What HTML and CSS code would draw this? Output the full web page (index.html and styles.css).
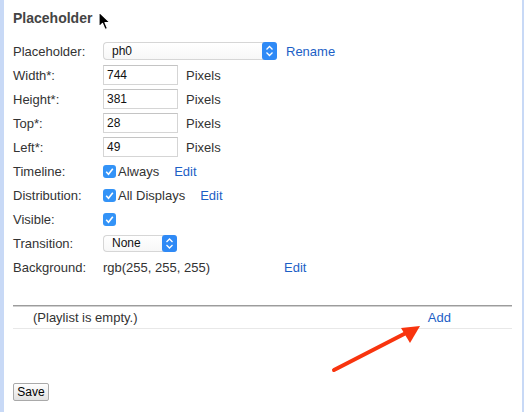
FILE: index.html
```html
<!DOCTYPE html>
<html>
<head>
<meta charset="utf-8">
<link rel="stylesheet" href="styles.css">
</head>
<body>
<div class="page">
  <h2 class="title">Placeholder</h2>
  <div class="form">
    <div class="row">
      <span class="label">Placeholder:</span>
      <span class="select wide"><span class="sel-text">ph0</span><svg class="stepper" width="15" height="18" viewBox="0 0 15 18"><rect x="0" y="0" width="15" height="18" rx="3" fill="#2f8af6"/><path d="M4.5 7.5 L7.5 4.5 L10.5 7.5 M4.5 10.5 L7.5 13.5 L10.5 10.5" stroke="#fff" stroke-width="1.3" fill="none"/></svg></span>
      <a class="link rename">Rename</a>
    </div>
    <div class="row">
      <span class="label">Width*:</span>
      <span class="input">744</span><span class="unit">Pixels</span>
    </div>
    <div class="row">
      <span class="label">Height*:</span>
      <span class="input">381</span><span class="unit">Pixels</span>
    </div>
    <div class="row">
      <span class="label">Top*:</span>
      <span class="input">28</span><span class="unit">Pixels</span>
    </div>
    <div class="row">
      <span class="label">Left*:</span>
      <span class="input">49</span><span class="unit">Pixels</span>
    </div>
    <div class="row">
      <span class="label">Timeline:</span>
      <svg class="check" width="13" height="13" viewBox="0 0 13 13"><rect width="13" height="13" rx="3" fill="#3393f7"/><path d="M3.2 6.8 L5.5 9.2 L9.8 3.8" stroke="#fff" stroke-width="1.6" fill="none"/></svg>
      <span class="cb-text">Always</span><a class="link edit">Edit</a>
    </div>
    <div class="row">
      <span class="label">Distribution:</span>
      <svg class="check" width="13" height="13" viewBox="0 0 13 13"><rect width="13" height="13" rx="3" fill="#3393f7"/><path d="M3.2 6.8 L5.5 9.2 L9.8 3.8" stroke="#fff" stroke-width="1.6" fill="none"/></svg>
      <span class="cb-text">All Displays</span><a class="link edit">Edit</a>
    </div>
    <div class="row">
      <span class="label">Visible:</span>
      <svg class="check" width="13" height="13" viewBox="0 0 13 13"><rect width="13" height="13" rx="3" fill="#3393f7"/><path d="M3.2 6.8 L5.5 9.2 L9.8 3.8" stroke="#fff" stroke-width="1.6" fill="none"/></svg>
    </div>
    <div class="row">
      <span class="label">Transition:</span>
      <span class="select narrow"><span class="sel-text">None</span><svg class="stepper" width="15" height="17" viewBox="0 0 15 17"><rect x="0" y="0" width="15" height="17" rx="3" fill="#2f8af6"/><path d="M4.5 7 L7.5 4 L10.5 7 M4.5 10 L7.5 13 L10.5 10" stroke="#fff" stroke-width="1.3" fill="none"/></svg></span>
    </div>
    <div class="row">
      <span class="label">Background:</span>
      <span class="bg-value">rgb(255, 255, 255)</span><a class="link">Edit</a>
    </div>
  </div>

  <div class="playlist">
    <span class="empty">(Playlist is empty.)</span>
    <a class="link add">Add</a>
  </div>

  <button class="save">Save</button>

  <svg class="arrow" width="100" height="60" viewBox="0 0 100 60"><line x1="8" y1="48" x2="80" y2="11" stroke="#f8340e" stroke-width="4" stroke-linecap="round"/><polygon points="94,4 75,6 84,21" fill="#f8340e"/></svg>

  <svg class="cursor" width="14" height="20" viewBox="0 0 14 20"><path d="M1 1 L1 16 L4.5 12.5 L7 18.5 L9.5 17.5 L7 11.5 L12 11.5 Z" fill="#000" stroke="#fff" stroke-width="1.2" stroke-linejoin="round"/></svg>
</div>
</body>
</html>
```
FILE: styles.css
```css
html, body {
  margin: 0;
  padding: 0;
  background: #fff;
}
body {
  font-family: "Liberation Sans", Arial, Helvetica, sans-serif;
  font-size: 13px;
  color: #333;
}
.page {
  position: relative;
  box-sizing: border-box;
  width: 524px;
  height: 412px;
  border-left: 4px solid #c8d9f6;
  border-right: 2px solid #c8d9f6;
  padding: 10px 10px 0 9px;
  overflow: hidden;
}
.title {
  margin: 0;
  font-size: 14px;
  font-weight: bold;
  line-height: 16px;
  color: #444;
}
.form {
  margin-top: 13px;
  display: flex;
  flex-direction: column;
}
.row {
  height: 24px;
  display: flex;
  align-items: center;
}
.label {
  width: 90px;
  flex: none;
}
.input {
  box-sizing: border-box;
  width: 75px;
  height: 20px;
  border: 1px solid #d5d5d5;
  border-top-color: #c4c4c4;
  font-size: 12px;
  color: #111;
  line-height: 18px;
  padding-left: 3px;
}
.unit {
  margin-left: 8px;
}
.select {
  box-sizing: border-box;
  display: flex;
  align-items: center;
  justify-content: space-between;
  height: 18px;
  border: 1px solid #d6d6d6;
  border-right: none;
  border-radius: 4px;
  background: linear-gradient(#fff, #f7f7f7);
  font-size: 12px;
  color: #111;
}
.select .stepper {
  margin-right: 0;
  margin-top: -1px;
  margin-bottom: -1px;
}
.sel-text {
  padding-left: 8px;
}
.wide {
  width: 174px;
}
.narrow {
  width: 74px;
  height: 17px;
}
.link {
  color: #1c5fc6;
  cursor: pointer;
}
.rename {
  margin-left: 9px;
}
.check {
  flex: none;
}
.cb-text {
  margin-left: 2px;
}
.edit {
  margin-left: 15px;
}
.bg-value {
  width: 181px;
}
.playlist {
  margin-top: 26px;
  border-top: 1px solid #9c9c9c;
  border-bottom: 1px solid #e8e8e8;
  height: 22px;
  display: flex;
  align-items: center;
  position: relative;
}
.playlist::before {
  content: "";
  position: absolute;
  left: 0;
  right: 0;
  top: 0;
  height: 1px;
  background: #d0d0d0;
}
.empty {
  padding-left: 20px;
}
.add {
  margin-left: auto;
  margin-right: 61px;
}
.save {
  display: block;
  margin-top: 54px;
  box-sizing: border-box;
  width: 36px;
  height: 18px;
  padding: 0;
  border: 1px solid #a9a9a9;
  border-radius: 2px;
  background: linear-gradient(#fefefe, #e2e2e2);
  font-family: "Liberation Sans", Arial, sans-serif;
  font-size: 12px;
  color: #000;
  line-height: 16px;
}
.arrow {
  position: absolute;
  left: 322px;
  top: 322px;
}
.cursor {
  position: absolute;
  left: 94px;
  top: 11px;
}
```
